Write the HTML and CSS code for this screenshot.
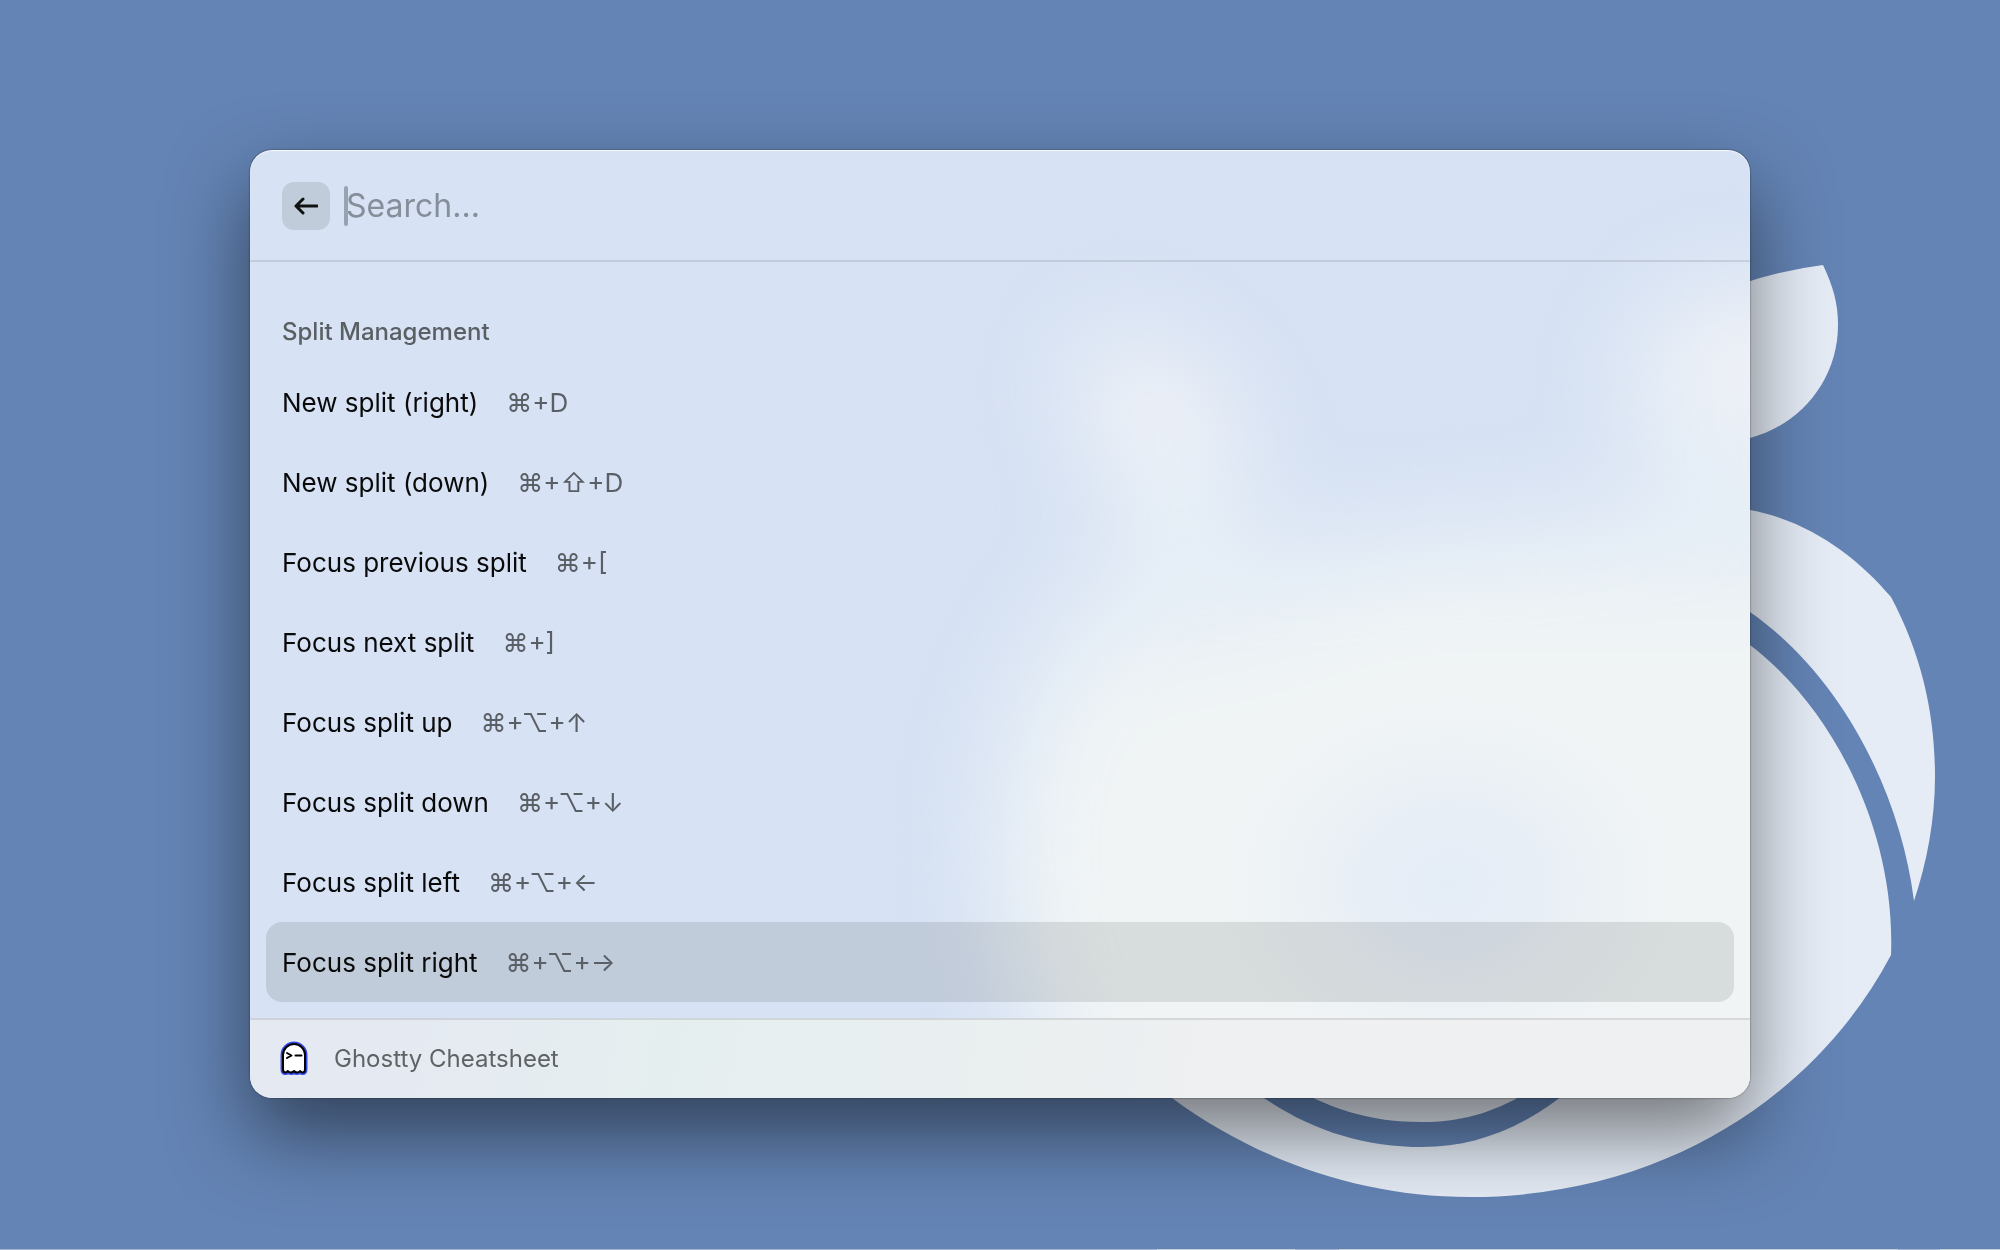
FILE: index.html
```html
<!DOCTYPE html>
<html lang="en">
<head>
<meta charset="utf-8">
<title>Ghostty Cheatsheet</title>
<meta name="viewport" content="width=device-width, initial-scale=1">
<link rel="stylesheet" href="styles.css">
</head>
<body>
<svg class="wallpaper" viewBox="0 0 2000 1250" preserveAspectRatio="xMidYMid slice" aria-hidden="true">
  <g fill="#e5ecf6">
    <path d="M1700 300Q1760 273 1823 265C1833 286 1838 303 1838 325C1838 380 1800 425 1750 438L1700 440Z"/>
    <path d="M1700 500L1750 510C1810 521 1858 558 1891 597C1922 655 1935 715 1935 776C1935 820 1927 862 1914 901C1900 790 1840 675 1750 612L1700 580Z"/>
    <path d="M1700 610L1750 645C1832 707 1896 830 1891 955C1820 1090 1670 1197 1470 1197C1360 1197 1256 1160 1172 1098L1172 1060H1700Z"/>
  </g>
  <path d="M1240 1080C1295 1125 1355 1147 1422 1147C1480 1147 1530 1125 1582 1080Z" fill="#6484b5"/>
  <path d="M1280 1080C1330 1110 1370 1122 1422 1122C1465 1122 1505 1110 1545 1080Z" fill="#e5ecf6"/>
  <path d="M0 1249h2000v1H0Z" fill="#a9b4cc"/>
  <path d="M1157 1249h138v1h-138ZM1339 1249h559v1h-559ZM1940 1249h60v1h-60Z" fill="#c8cfd4"/>
</svg>
<main class="stage">
  <section class="panel" aria-label="Ghostty Cheatsheet">
    <svg class="frost" viewBox="0 0 1500 948" preserveAspectRatio="none" aria-hidden="true">
      <defs>
        <filter id="soft" x="-50%" y="-50%" width="200%" height="200%" color-interpolation-filters="sRGB"><feGaussianBlur stdDeviation="46"/></filter>
        <radialGradient id="hollow"><stop offset="0" stop-color="#e4ecf6"/><stop offset=".35" stop-color="#e6edf6" stop-opacity=".85"/><stop offset="1" stop-color="#ecf1f5" stop-opacity="0"/></radialGradient>
      </defs>
      <g filter="url(#soft)">
        <path d="M825 190C880 160 960 190 995 270C1005 330 985 370 1010 395C1140 370 1330 370 1420 340C1350 280 1350 170 1460 130H1620V1040H880C770 920 715 760 745 610C765 520 800 460 860 410C880 360 820 280 815 230Z" fill="#e6eef6"/>
        <ellipse cx="913" cy="262" rx="55" ry="50" fill="#f0f1f6"/>
        <ellipse cx="1500" cy="215" rx="70" ry="60" fill="#f0f1f6"/>
        <path d="M870 510C1010 500 1060 460 1180 440H1620V1040H900C800 920 750 760 790 640C800 590 830 540 870 510Z" fill="#f0f4f5"/>
      </g>
      <ellipse cx="1200" cy="735" rx="240" ry="200" fill="url(#hollow)"/>
    </svg>
    <header class="search">
      <button class="back" type="button" aria-label="Back">
        <svg width="24" height="18" viewBox="0 0 24 18" aria-hidden="true"><path d="M9 2 2 9l7 7M2 9h21" fill="none" stroke="#111" stroke-width="3" stroke-linecap="round" stroke-linejoin="round"/></svg>
      </button>
      <div class="field">
        <input class="query" type="text" placeholder="Search..." aria-label="Search">
        <span class="caret"></span>
      </div>
    </header>
    <div class="list">
      <h2 class="section">Split Management</h2>
      <ul class="rows">
        <li class="row"><span>New split (right)</span><span class="keys">⌘+D</span></li>
        <li class="row"><span>New split (down)</span><span class="keys">⌘+⇧+D</span></li>
        <li class="row"><span>Focus previous split</span><span class="keys">⌘+[</span></li>
        <li class="row"><span>Focus next split</span><span class="keys">⌘+]</span></li>
        <li class="row"><span>Focus split up</span><span class="keys">⌘+⌥+↑</span></li>
        <li class="row"><span>Focus split down</span><span class="keys">⌘+⌥+↓</span></li>
        <li class="row"><span>Focus split left</span><span class="keys">⌘+⌥+←</span></li>
        <li class="row selected"><span>Focus split right</span><span class="keys">⌘+⌥+→</span></li>
      </ul>
    </div>
    <footer class="footer">
      <svg class="ghost" width="28" height="34" viewBox="0 0 28 34" aria-hidden="true">
        <path d="M3 14a11 11 0 0 1 22 0V28q0 3.500-2.500 3.500-1 0-2.200-1-1.500 1-3.300 1-1.700 0-3-1-1.300 1-3 1-1.800 0-3.300-1-1.200 1-2.200 1Q3 31.500 3 28Z" fill="#fff" stroke="#3548ea" stroke-width="5" stroke-linejoin="round"/>
        <path d="M3 14a11 11 0 0 1 22 0V28q0 3.500-2.500 3.500-1 0-2.200-1.500-1.500 1.500-3.300 1.500-1.700 0-3-1.500-1.300 1.500-3 1.500-1.800 0-3.300-1.500-1.200 1.500-2.200 1.500Q3 31.500 3 28Z" fill="#fff" stroke="#000" stroke-width="2" stroke-linejoin="round"/>
        <path d="m7 12 4.500 2.500L7 17M15.500 14.500h6" fill="none" stroke="#000" stroke-width="2" stroke-linecap="round" stroke-linejoin="round"/>
      </svg>
      <span>Ghostty Cheatsheet</span>
    </footer>
  </section>
</main>
</body>
</html>
```
FILE: styles.css
```css
* {
  box-sizing: border-box;
}

body {
  margin: 0;
  min-height: 100vh;
  background: #6484b5;
  color: #0a0a0a;
  font-family: Inter, "Noto Sans", sans-serif;
}

.wallpaper {
  position: fixed;
  inset: 0;
  width: 100%;
  height: 100%;
}

.stage {
  position: relative;
  min-height: 100vh;
  padding: 12vh 12.5% 64px;
}

.panel {
  position: relative;
  display: flex;
  flex-direction: column;
  overflow: hidden;
  border-radius: 22px;
  background: #d7e2f4;
  box-shadow: 0 0 2px rgba(0, 0, 0, 0.6), 0 36px 80px rgba(0, 0, 0, 0.5);
}

.panel::after {
  content: "";
  position: absolute;
  inset: 0;
  border-radius: inherit;
  box-shadow: inset 0 1px 1px rgba(255, 255, 255, 0.8);
  pointer-events: none;
}

.frost {
  position: absolute;
  inset: 0;
  width: 100%;
  height: 100%;
}

.search,
.list,
.footer {
  position: relative;
}

.search {
  display: flex;
  align-items: center;
  gap: 16px;
  height: 112px;
  padding: 2px 32px 0;
  border-bottom: 2px solid rgba(0, 5, 0, 0.1);
}

.back {
  display: grid;
  place-items: center;
  width: 48px;
  height: 48px;
  padding: 0;
  border: 0;
  border-radius: 12px;
  background: rgba(0, 5, 0, 0.1);
}

.field {
  position: relative;
  flex: 1;
}

.query {
  display: block;
  width: 100%;
  height: 40px;
  padding: 0;
  border: 0;
  outline: 0;
  background: transparent;
  font: 32px/40px Inter, sans-serif;
}

.query::placeholder {
  color: #868e9a;
  opacity: 1;
}

.caret {
  position: absolute;
  top: 0;
  left: -2px;
  width: 4px;
  height: 40px;
  border-radius: 2px;
  background: #98a2b1;
}

.list {
  padding: 54px 16px 16px;
}

.section {
  margin: 0;
  padding: 0 16px 14px;
  color: #5a5f63;
  font-size: 24px;
  font-weight: 500;
  line-height: 32px;
}

.rows {
  margin: 0;
  padding: 0;
  list-style: none;
}

.row {
  display: flex;
  align-items: center;
  gap: 28px;
  height: 80px;
  padding: 0 16px;
  border-radius: 16px;
  font-size: 26px;
}

.selected {
  background: rgba(0, 5, 0, 0.1);
}

.keys {
  color: #5a5f66;
}

.footer {
  display: flex;
  align-items: center;
  gap: 26px;
  height: 80px;
  padding: 0 30px 2px;
  border-top: 2px solid rgba(0, 5, 0, 0.1);
  background: linear-gradient(100deg, #e5eaf2 0%, #e5eaf2 10%, #e5eeef 28%, #e9eff0 45%, #eff0f2 68%, #eff0f2 100%);
  color: #606366;
  font-size: 24px;
}

.ghost {
  overflow: visible;
}
```
